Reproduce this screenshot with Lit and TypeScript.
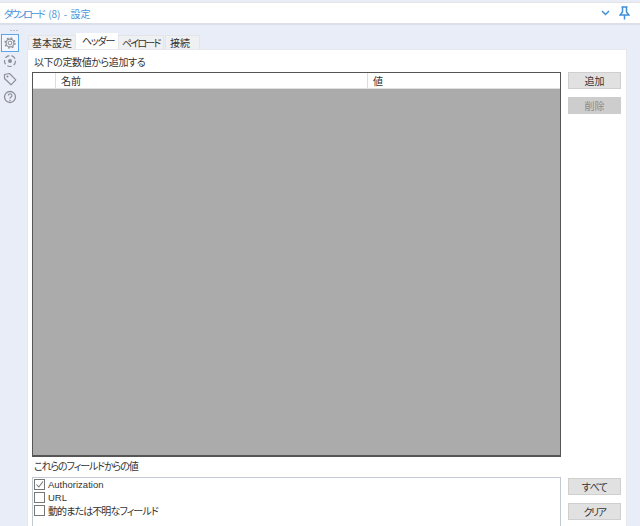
import { LitElement, html, css, svg } from "lit";
import { customElement } from "lit/decorators.js";

const FONT = css`"Noto Sans CJK JP", "Liberation Sans", sans-serif`;

@customElement("app-root")
export class AppRoot extends LitElement {
  static styles = css`
    :host { display: block; width: 640px; height: 526px; overflow: hidden; background: #e9edf8; font-family: ${FONT}; color: #333; font-size: 10px; font-feature-settings: "palt" 1; }
    .page { height: 526px; display: flex; flex-direction: column; }
    .title { flex: none; margin-top: 2px; height: 20px; background: #fff; border-bottom: 2px solid #dcdfe6; border-top: 1px solid #e4e4e4; box-sizing: content-box; display: flex; align-items: center; padding: 0 10px 0 4px; color: #4a95da; font-size: 10px; }
    .name { flex: 1; word-spacing: 1px; white-space: nowrap; }
    .k { letter-spacing: -2.6px; margin-right: 2px; }
    .title svg { display: block; }
    .chev { margin-right: 9px; }
    .main { flex: 1; min-height: 0; display: flex; }
    .rail { flex: none; width: 27px; display: flex; flex-direction: column; align-items: center; padding-top: 5px; box-sizing: border-box; gap: 2px; }
    .dots { height: 3px; display: flex; gap: 1px; }
    .dots i { width: 2px; height: 1px; background: #b9bec8; }
    .ri { width: 16px; height: 16px; display: flex; align-items: center; justify-content: center; box-sizing: border-box; margin-left: -7px; }
    .ri.on { outline: 1px solid #5aa6e8; background: #f3f6fc; }
    .content { width: 600px; flex: none; padding-top: 9px; display: flex; flex-direction: column; min-height: 0; }
    .tabs { flex: none; display: flex; height: 15px; padding-left: 1px; align-items: flex-end; }
    .tab { height: 14px; line-height: 13px; background: #eff0f2; border: 1px solid #e3e5ea; border-bottom: 0; box-sizing: border-box; color: #333; white-space: nowrap; overflow: hidden; }
    .t1 { width: 48px; padding-left: 3px; }
    .t2 { width: 42px; padding-left: 5px; letter-spacing: -1.2px; }
    .t3 { width: 46px; padding-left: 3px; letter-spacing: -1.8px; }
    .t4 { width: 35px; margin-left: 1px; padding-left: 4px; }
    .tab.on { height: 16px; background: #fff; border-color: #fff; line-height: 14px; }
    .panel { flex: 1; min-height: 0; background: #fff; border: 1px solid #e6e8ee; border-bottom: 0; padding: 5px 5px 0 4px; display: grid; grid-template-columns: 529px 60px; column-gap: 7px; grid-template-rows: 13px 385px 6px 13px 1fr; }
    .lbl { line-height: 13px; padding-left: 2px; color: #333; letter-spacing: -0.4px; white-space: nowrap; }
    .tbl { grid-column: 1; grid-row: 2; margin-top: 4px; height: 385px; box-sizing: border-box; border: 1px solid #555; border-bottom-width: 2px; background: #ababab; }
    .head { height: 15px; background: #fff; display: grid; grid-template-columns: 22px 312px 1fr; border-bottom: 1px solid #e0e0e0; box-sizing: content-box; }
    .head div { line-height: 15px; padding-left: 5px; border-left: 1px solid #ddd; }
    .head div:first-child { border-left: 0; }
    .btns { grid-column: 2; grid-row: 2; margin-top: 4px; display: flex; flex-direction: column; gap: 8px; width: 53px; }
    .btn { height: 17px; box-sizing: border-box; border: 1px solid #cfcfcf; background: #e1e1e1; text-align: center; line-height: 15px; color: #333; font-size: 10px; padding: 0; font-family: inherit; font-feature-settings: inherit; }
    .btn.off { background: #cdcdcd; border-color: #cdcdcd; color: #8a8a8a; }
    .btn.all { letter-spacing: -0.7px; }
    .btn.clr { letter-spacing: -1.5px; }
    .l2 { grid-column: 1; grid-row: 4; letter-spacing: -1.1px; }
    .list { grid-column: 1; grid-row: 5; margin-top: 5px; border: 1px solid #c3c9d3; border-bottom: 0; padding: 0 0 0 1px; box-sizing: border-box; height: 60px; }
    .row { display: flex; align-items: center; height: 13px; gap: 3px; color: #333; letter-spacing: -0.9px; }
    .box { width: 11px; height: 11px; border: 1px solid #777; box-sizing: border-box; flex: none; background: #fff; }
    .box svg { display: block; }
    .btns2 { grid-column: 2; grid-row: 5; margin-top: 6px; display: flex; flex-direction: column; gap: 8px; width: 53px; }
    .latin { font-family: "Liberation Sans", sans-serif; font-size: 9.5px; letter-spacing: 0; }
  `;

  icon(kind: string) {
    const s = "#8c8f96";
    const parts: Record<string, unknown> = {
      gear: svg`<circle cx="7" cy="7" r="1.9" fill="none" stroke="${s}"/><circle cx="7" cy="7" r="3.9" fill="none" stroke="${s}" stroke-width="1.1"/><circle cx="7" cy="7" r="5" fill="none" stroke="${s}" stroke-width="1.4" stroke-dasharray="1.8 2.13"/>`,
      target: svg`<circle cx="7" cy="7" r="5.5" fill="none" stroke="${s}" stroke-width="1.2" stroke-dasharray="4.5 2.2"/><circle cx="7" cy="7" r="2" fill="${s}"/>`,
      tag: svg`<path d="M1.5 2.5 L6.5 1.5 L12.8 7.8 L8 12.8 L1.5 6.5 Z" fill="none" stroke="${s}" stroke-width="1.2" stroke-linejoin="round"/><circle cx="4.5" cy="4.5" r="1" fill="${s}"/>`,
      help: svg`<circle cx="7" cy="7" r="5.5" fill="none" stroke="${s}" stroke-width="1.3"/><path d="M5.3 5.6 A1.8 1.8 0 1 1 7.6 7.3 Q7 7.6 7 8.6" fill="none" stroke="${s}" stroke-width="1.2"/><circle cx="7" cy="10.2" r=".8" fill="${s}"/>`,
    };
    return html`<svg width="14" height="14" viewBox="0 0 14 14">${parts[kind]}</svg>`;
  }

  row(label: string, checked: boolean, latin: boolean) {
    return html`<div class="row">
      <div class="box">${checked ? html`<svg width="9" height="9" viewBox="0 0 9 9"><path d="M1.5 4.5 L3.8 7 L8 1.5" fill="none" stroke="#777" stroke-width="1.1"/></svg>` : ""}</div>
      <span class="${latin ? "latin" : ""}">${label}</span>
    </div>`;
  }

  render() {
    return html`<div class="page">
      <div class="title">
        <div class="name"><span class="k">ダウンロード</span> (8) - 設定</div>
        <svg class="chev" width="9" height="6" viewBox="0 0 9 6"><path d="M1 1 L4.5 4.5 L8 1" fill="none" stroke="#3f8fd8" stroke-width="1.5"/></svg>
        <svg width="11" height="14" viewBox="0 0 11 14"><path d="M2.5 1 H8.5 M3.5 1 V6 L1.2 9 H9.8 L7.5 6 V1 M5.5 9 V13.5" fill="none" stroke="#3f8fd8" stroke-width="1.5"/></svg>
      </div>
      <div class="main">
        <div class="rail">
          <div class="dots"><i></i><i></i><i></i></div>
          <div class="ri on">${this.icon("gear")}</div>
          <div class="ri">${this.icon("target")}</div>
          <div class="ri">${this.icon("tag")}</div>
          <div class="ri">${this.icon("help")}</div>
        </div>
        <div class="content">
          <div class="tabs">
            <div class="tab t1">基本設定</div>
            <div class="tab t2 on">ヘッダー</div>
            <div class="tab t3">ペイロード</div>
            <div class="tab t4">接続</div>
          </div>
          <div class="panel">
            <div class="lbl">以下の定数値から追加する</div>
            <div class="tbl">
              <div class="head"><div></div><div>名前</div><div>値</div></div>
            </div>
            <div class="btns">
              <button class="btn">追加</button>
              <button class="btn off">削除</button>
            </div>
            <div class="lbl l2">これらのフィールドからの値</div>
            <div class="list">
              ${this.row("Authorization", true, true)}
              ${this.row("URL", false, true)}
              ${this.row("動的または不明なフィールド", false, false)}
            </div>
            <div class="btns2">
              <button class="btn all">すべて</button>
              <button class="btn clr">クリア</button>
            </div>
          </div>
        </div>
      </div>
    </div>`;
  }
}
